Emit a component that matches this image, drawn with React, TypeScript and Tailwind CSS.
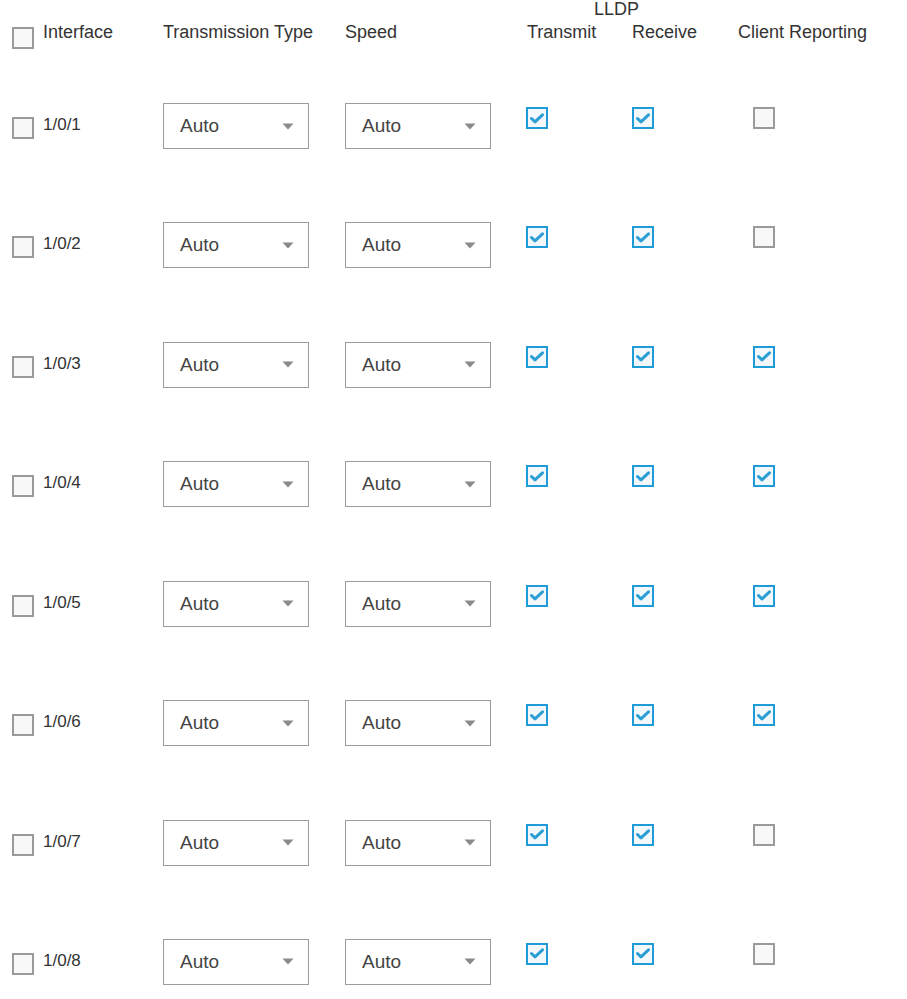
import React from 'react';

const ports = [
  { name: '1/0/1', client: false },
  { name: '1/0/2', client: false },
  { name: '1/0/3', client: true },
  { name: '1/0/4', client: true },
  { name: '1/0/5', client: true },
  { name: '1/0/6', client: true },
  { name: '1/0/7', client: false },
  { name: '1/0/8', client: false },
];

function Box({ checked, className = '' }: { checked?: boolean; className?: string }) {
  if (!checked) {
    return <div className={`w-[22px] h-[22px] shrink-0 border-2 border-[#9a9a9a] bg-[#f8f8f8] ${className}`} />;
  }
  return (
    <div className={`w-[22px] h-[22px] shrink-0 border-2 border-[#1f9bd7] bg-[#f3f8fd] flex items-center justify-center ${className}`}>
      <svg width="14" height="11" viewBox="0 0 14 11">
        <path d="M1.5 5.5 L5 8.8 L12.5 1.8" fill="none" stroke="#2b9ed3" strokeWidth="3" strokeLinecap="round" strokeLinejoin="round" />
      </svg>
    </div>
  );
}

function Select() {
  return (
    <div className="w-[146px] h-[46px] border-[1.5px] border-[#9b9b9b] bg-white flex items-center justify-between pl-4 pr-[14px]">
      <span className="text-[19px] text-[#444]">Auto</span>
      <svg width="12" height="7" viewBox="0 0 12 7">
        <path d="M0.5 0.5 H11.5 L6 6.5 Z" fill="#8a8a8a" />
      </svg>
    </div>
  );
}

export default function App() {
  return (
    <div
      className="w-[907px] h-[999px] bg-white overflow-hidden text-[#333] text-[17px] leading-[20px]"
      style={{ fontFamily: '"Liberation Sans", Arial, sans-serif' }}
    >
      {/* header */}
      <div className="flex h-[103px] pt-[22px] text-[18px]">
        <div className="w-[163px] pl-3 flex items-start">
          <Box className="mt-[5px]" />
          <span className="ml-[9px]">Interface</span>
        </div>
        <div className="w-[182px]">Transmission Type</div>
        <div className="w-[181px]">Speed</div>
        <div className="w-[212px] -mt-[23px] flex flex-col">
          <div className="pl-[68px] h-[23px]">LLDP</div>
          <div className="flex">
            <div className="w-[106px] pl-px">Transmit</div>
            <div className="w-[106px]">Receive</div>
          </div>
        </div>
        <div>Client Reporting</div>
      </div>

      {ports.map(p => (
        <div key={p.name} className="flex h-[119.43px]">
          <div className="w-[163px] pl-3 flex items-start">
            <Box className="mt-[14px]" />
            <span className="ml-[9px] mt-[12px]">{p.name}</span>
          </div>
          <div className="w-[182px]">
            <Select />
          </div>
          <div className="w-[181px]">
            <Select />
          </div>
          <div className="w-[106px] pt-1">
            <Box checked />
          </div>
          <div className="w-[106px] pt-1">
            <Box checked />
          </div>
          <div className="pt-1 pl-[15px]">
            <Box checked={p.client} />
          </div>
        </div>
      ))}
    </div>
  );
}
